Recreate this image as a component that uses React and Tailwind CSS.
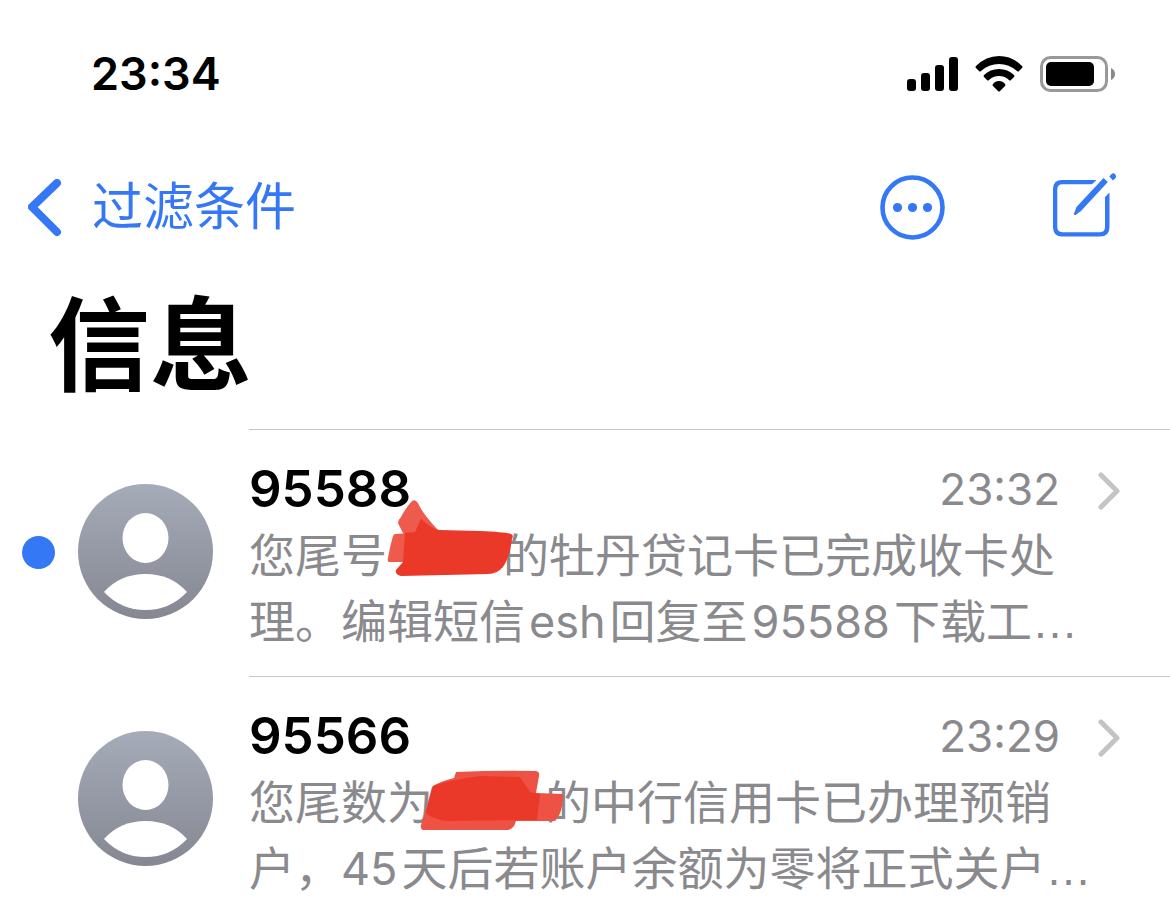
const messages = [
  {
    id: '95588',
    time: '23:32',
    unread: true,
    before: '您尾号',
    after: '的牡丹贷记卡已完成收卡处',
    rest: (
      <>
        理。编辑短信<Latin>esh</Latin>回复至<Latin>95588</Latin>下载工
      </>
    ),
    Mark: MarkOne,
  },
  {
    id: '95566',
    time: '23:29',
    unread: false,
    before: '您尾数为',
    after: '的中行信用卡已办理预销',
    rest: (
      <>
        户，<span className="mr-1 text-[45px]">45</span>天后若账户余额为零将正式关户
      </>
    ),
    Mark: MarkTwo,
  },
]

function Latin({ children }) {
  return <span className="mx-1 text-[45px]">{children}</span>
}

function MarkOne() {
  return (
    <span className="relative inline-block w-[116px]">
      <svg className="absolute -top-[82px] -left-[17px] h-[100px] w-[150px]" viewBox="370 490 150 100" aria-hidden="true">
        <path d="M412 501 Q415 499 418 503 Q422 513 438 530 L412 545 L403 533 L398 523 Q398 520 401 517 Q405 509 412 501 Z" fill="#ee5a4c" />
        <path d="M395 534 L412 533 L410 562 L389 562 Q387 561 388 558 Q390 546 393 536 Q394 534 395 534 Z" fill="#ee5a4c" />
        <path d="M421 519 Q432 529 439 530 L480 531 Q505 532 511 534 Q514 535 512 539 Q510 557 503 567 Q497 574 488 574 L401 576 Q395 575 396 570 L403 562 L405 533 L415 532 Z" fill="#ea3829" />
      </svg>
    </span>
  )
}

function MarkTwo() {
  return (
    <span className="relative inline-block w-[112px]">
      <svg className="absolute -top-[82px] -left-[16px] h-[100px] w-[150px]" viewBox="417 738 150 100" aria-hidden="true">
        <path d="M456 773 Q498 771 536 772 Q540 773 539 777 L536 794 L562 795 Q564 796 563 799 Q562 816 555 822 L516 822 Q514 830 508 831 L423 831 Q420 830 421 826 L425 814 L432 788 Q438 783 454 779 Z" fill="#ee5245" />
        <path d="M433 787 Q450 781 480 777 L520 778 L530 793 L540 795 L537 821 L448 822 Q430 820 426 813 Z" fill="#ea3829" />
      </svg>
    </span>
  )
}

function StatusIcons() {
  return (
    <div className="flex items-center">
      <svg width="52" height="34" viewBox="0 0 52 34" aria-hidden="true">
        <rect x="0" y="22" width="9" height="12" rx="3" />
        <rect x="14" y="16" width="9" height="18" rx="3" />
        <rect x="28" y="8" width="9" height="26" rx="3" />
        <rect x="42" y="0" width="9" height="34" rx="3" />
      </svg>
      <svg className="ml-4" width="48" height="36" viewBox="0 0 48 36" aria-hidden="true">
        <path d="M1 10 Q11 0 24 0 Q37 0 47 10 Q48 11 47 12 L44 15 Q43 16 42 15 Q34 8 24 8 Q14 8 6 15 Q5 16 4 15 L1 12 Q0 11 1 10 Z" />
        <path d="M9 19 Q15 13 24 13 Q33 13 39 19 Q40 20 39 21 L36 24 Q35 25 34 24 Q30 20 24 20 Q18 20 14 24 Q13 25 12 24 L9 21 Q8 20 9 19 Z" />
        <path d="M18 28 Q20 25 24 25 Q28 25 30 28 Q31 29 30 30 L25 35 Q24 36 23 35 L18 30 Q17 29 18 28 Z" />
      </svg>
      <svg className="ml-4" width="76" height="36" viewBox="0 0 76 36" aria-hidden="true">
        <rect x="2.500" y="1.500" width="65" height="33" rx="9" fill="none" stroke="#999" strokeWidth="3" />
        <rect x="7" y="6" width="48" height="24" rx="5" />
        <path d="M72 12 Q76 14 76 18 Q76 22 72 24 Z" fill="#888" />
      </svg>
    </div>
  )
}

function Avatar({ id }) {
  return (
    <svg className="h-[135px] w-[135px] shrink-0" viewBox="0 0 135 135" aria-hidden="true">
      <defs>
        <linearGradient id={`avatar-${id}`} x1="0" y1="0" x2="0" y2="1">
          <stop offset="0" stopColor="#a6abb9" />
          <stop offset="1" stopColor="#858892" />
        </linearGradient>
      </defs>
      <circle cx="67.500" cy="67.500" r="67.500" fill={`url(#avatar-${id})`} />
      <ellipse cx="67.500" cy="54" rx="23" ry="25" fill="#fff" />
      <path d="M26 108 Q42 90 67.500 90 Q93 90 109 108 Q92 126 67.500 126 Q43 126 26 108 Z" fill="#fff" />
    </svg>
  )
}

function MessageRow({ message }) {
  const { id, time, unread, before, after, rest, Mark } = message
  return (
    <li className="flex">
      <div className="flex w-[249px] shrink-0 items-center pl-[22px]">
        <span className={unread ? 'h-[33px] w-[33px] rounded-full bg-[#3478f6]' : 'h-[33px] w-[33px]'} />
        <div className="ml-[23px] pb-[3px]">
          <Avatar id={id} />
        </div>
      </div>
      <div className="min-w-0 flex-1 border-t border-[#c6c6c8] pt-[26px] pb-[21px]">
        <div className="flex items-center pr-[50px] leading-[66px]">
          <h2 className="flex-1 text-[51px] font-semibold">{id}</h2>
          <time className="text-[44px] text-[#8a8a8e]">{time}</time>
          <svg className="ml-[38px]" width="22" height="42" viewBox="0 0 22 42" fill="none" aria-hidden="true">
            <path d="M3 7 L19 23 L3 39" stroke="#c4c4c6" strokeWidth="5" strokeLinecap="round" strokeLinejoin="round" />
          </svg>
        </div>
        <p className="text-[46px] leading-[66px] whitespace-nowrap text-[#8a8a8e]">
          {before}
          <Mark />
          {after}
          <br />
          {rest}
          <span className="font-['Liberation_Sans',sans-serif]">…</span>
        </p>
      </div>
    </li>
  )
}

export default function App() {
  return (
    <div className="min-h-screen overflow-hidden bg-white font-['Inter','Noto_Sans_CJK_SC',sans-serif] text-black">
      <div className="flex h-[148px] items-center justify-between pr-[55px] pl-[91px]">
        <span className="text-[45px] font-semibold">23:34</span>
        <StatusIcons />
      </div>

      <nav className="flex h-[119px] items-center justify-between pr-[54px] pl-[28px] text-[#3478f6]">
        <a href="#filters" className="flex items-center text-[51px]">
          <svg width="34" height="58" viewBox="0 0 34 58" fill="none" aria-hidden="true">
            <path d="M29 4 L4 28 L29 53" stroke="currentColor" strokeWidth="8" strokeLinecap="round" strokeLinejoin="round" />
          </svg>
          <span className="ml-[30px]">过滤条件</span>
        </a>
        <div className="flex items-center">
          <button type="button" aria-label="更多">
            <svg width="65" height="65" viewBox="0 0 65 65" aria-hidden="true">
              <circle cx="32.500" cy="32.500" r="30" fill="none" stroke="currentColor" strokeWidth="4.600" />
              <circle cx="17.500" cy="32.500" r="4.600" fill="currentColor" />
              <circle cx="32.500" cy="32.500" r="4.600" fill="currentColor" />
              <circle cx="47.500" cy="32.500" r="4.600" fill="currentColor" />
            </svg>
          </button>
          <button type="button" aria-label="新信息" className="ml-[108px]">
            <svg width="63" height="70" viewBox="0 0 63 70" aria-hidden="true">
              <path
                d="M43.500 7 H9 Q0 7 0 16 V54 Q0 63.500 9 63.500 H47 Q56.500 63.500 56.500 54 V19.500 L52 24 V54 Q52 59.200 47 59.200 H9.500 Q4.300 59.200 4.300 54 V16.500 Q4.300 11.300 9.500 11.300 H39 Z"
                fill="currentColor"
              />
              <path d="M50.500 5 L54.800 9 L28 38 L22.500 42 Q20.500 42.500 21 40.500 L23.500 34 Z" fill="currentColor" />
              <path d="M56.300 3.500 L58.500 1 Q60.500 -0.500 62.300 1.500 Q63.700 3.500 62.300 5.200 L60 7.500 Z" fill="currentColor" />
            </svg>
          </button>
        </div>
      </nav>

      <h1 className="px-[48px] pt-[5px] pb-2 text-[102px] leading-[149px] font-bold">信息</h1>

      <ul>
        {messages.map((message) => (
          <MessageRow key={message.id} message={message} />
        ))}
      </ul>
    </div>
  )
}
